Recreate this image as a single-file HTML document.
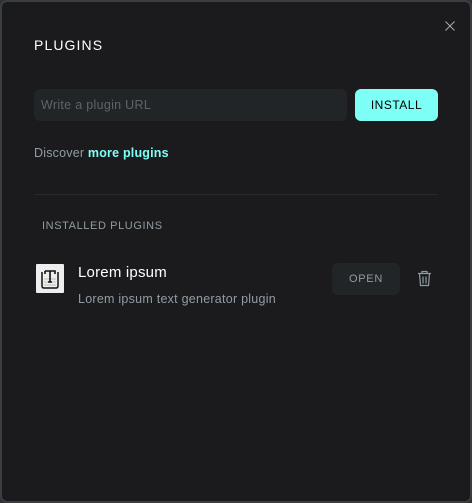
<!DOCTYPE html>
<html><head><style>
*{box-sizing:border-box;margin:0;padding:0}
html,body{width:472px;height:503px;background:#2e3134;overflow:hidden;font-family:"Liberation Sans",sans-serif}
.d{position:absolute;left:0;top:0;width:472px;height:503px;background:#1b1b1d;border:2px solid #3a3e41;border-radius:7px}
.t{position:absolute;left:34px;top:37px;color:#fff;font-size:14px;letter-spacing:1.1px}
.in{position:absolute;left:34px;top:89px;width:313px;height:32px;background:#222527;border-radius:6px;color:#5d6469;font-size:12.5px;line-height:32px;padding-left:7px;letter-spacing:0.3px}
.bt{position:absolute;left:355px;top:89px;width:83px;height:32px;background:#7efff5;border-radius:6px;color:#000;font-size:12px;line-height:32px;text-align:center;letter-spacing:0.5px}
.disc{position:absolute;left:34px;top:146px;font-size:12.5px;color:#8f9da3;letter-spacing:0.2px}
.disc b{color:#7efff5}
.hr{position:absolute;left:34px;top:194px;width:404px;height:1px;background:#26292b}
.ip{position:absolute;left:42px;top:220px;font-size:11px;color:#8f9da3;letter-spacing:0.6px}
.ic{position:absolute;left:36px;top:264px;width:28px;height:29px;background:#eee;border-radius:1px}
.n{position:absolute;left:78px;top:264px;font-size:15px;color:#fff;letter-spacing:0.2px}
.s{position:absolute;left:78px;top:292px;font-size:12.5px;color:#8f9da3;letter-spacing:0.25px}
.op{position:absolute;left:332px;top:263px;width:68px;height:32px;background:#222527;border-radius:6px;color:#8f9da3;font-size:11px;line-height:32px;text-align:center;letter-spacing:0.7px}
</style></head><body>
<div class="d">
<svg style="position:absolute;left:443px;top:19px" width="10" height="10" viewBox="0 0 10 10"><path d="M0.5 0.5L9.5 9.5M9.5 0.5L0.5 9.5" stroke="#aaa" stroke-width="1"/></svg>
</div>
<div class="t">PLUGINS</div>
<div class="in">Write a plugin URL</div>
<div class="bt">INSTALL</div>
<div class="disc">Discover <b>more plugins</b></div>
<div class="hr"></div>
<div class="ip">INSTALLED PLUGINS</div>
<div class="ic"><svg width="28" height="29" viewBox="0 0 28 29"><path d="M6 8v14q0 2 2 2h12q2 0 2-2V8" fill="none" stroke="#111" stroke-width="1.5"/><path d="M8 15h12M8 18h12M8 21h12" stroke="#c9beb5" stroke-width="1"/><path d="M9 7h10v3M9 7v3M14 7v11M12 18h4" stroke="#111" stroke-width="1.6" fill="none"/></svg></div>
<div class="n">Lorem ipsum</div>
<div class="s">Lorem ipsum text generator plugin</div>
<div class="op">OPEN</div>
<svg style="position:absolute;left:417px;top:270px" width="15" height="17" viewBox="0 0 15 17"><path d="M1 3.5h13M5 3.5V1.5h5v2M2.5 3.5l1 12h8l1-12M6 6.5v7M9 6.5v7" fill="none" stroke="#8f9da3" stroke-width="1.2"/></svg>
</body></html>
